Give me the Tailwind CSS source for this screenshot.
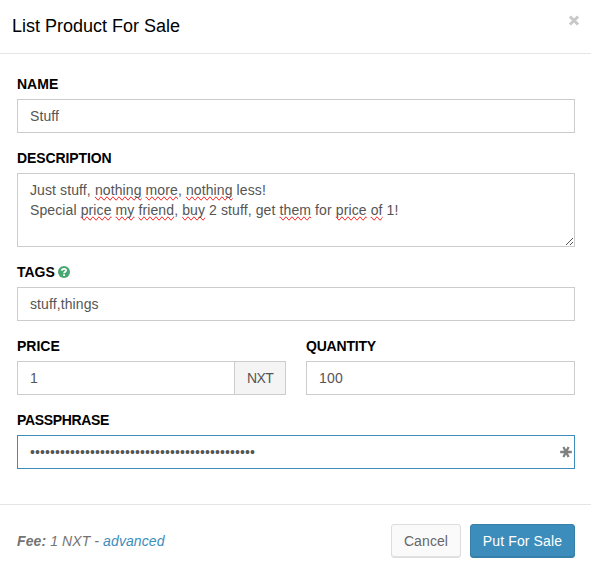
<!DOCTYPE html>
<html lang="en">

<head>
    <meta charset="UTF-8">
    <meta name="viewport" content="width=device-width, initial-scale=1.0">
    <title>List Product For Sale</title>
    <!-- Tailwind CSS -->
    <script src="https://cdn.jsdelivr.net/npm/@tailwindcss/browser@4"></script>
</head>

<body class="bg-white h-screen overflow-hidden font-['Liberation_Sans',Arial,sans-serif] text-sm leading-5 text-[#555]">
    <div class="flex justify-between h-[54px] border-b border-[#e5e5e5] pl-3 pr-[11px]">
        <h4 class="pt-[13px] text-lg leading-[26px] text-black">List Product For Sale</h4>
        <button class="self-start pt-[15px]" aria-label="Close">
            <svg class="block" width="12" height="11" viewBox="0 0 12 11">
                <path d="M1.9 1.5L10.1 9.5M10.1 1.5L1.9 9.5" stroke="#c8c8c8" stroke-width="3" fill="none" />
            </svg>
        </button>
    </div>

    <div class="flex flex-col gap-[15px] pt-5 pl-[17px] pr-4">
        <div>
            <label for="name" class="block mb-[5px] font-bold text-black">NAME</label>
            <input type="text" id="name" value="Stuff" class="block w-full h-[34px] px-3 border border-[#ccc] tracking-[0.1px]">
        </div>

        <div>
            <label class="block mb-[5px] font-bold text-black tracking-[-0.1px]">DESCRIPTION</label>
            <!-- Misspelled words (u) get the browser's spelling squiggle -->
            <div class="relative h-[74px] px-3 py-1.5 border border-[#ccc] whitespace-nowrap tracking-[0.11px] [&_u]:[text-decoration-line:spelling-error]">
                <p>Just stuff, <u>nothing</u> <u>more</u>, <u>nothing</u> less!</p>
                <p>Special <u>price</u> <u>my</u> <u>friend</u>, <u>buy</u> 2 stuff, get <u>them</u> for <u>price</u> <u>of</u> 1!</p>
                <svg class="absolute right-0 bottom-0" width="9" height="9" viewBox="0 0 9 9" shape-rendering="crispEdges">
                    <path d="M1 8L8 1M5 8L8 5" stroke="#555" fill="none" />
                </svg>
            </div>
        </div>

        <div>
            <label for="tags" class="flex items-center gap-[3px] mb-[5px] font-bold text-black">TAGS
                <svg width="12" height="12" viewBox="0 0 12 12">
                    <circle cx="6" cy="6" r="6" fill="#47a770" />
                    <path d="M3.8 4.6C4 2.2 8.2 2.3 8.1 4.5C8 5.9 6.1 5.7 6.1 7.3" stroke="#fff" stroke-width="1.8" fill="none" />
                    <path d="M5.1 8.2h1.9v1.7H5.1z" fill="#fff" />
                </svg>
            </label>
            <input type="text" id="tags" value="stuff,things" class="block w-full h-[34px] px-3 border border-[#ccc] tracking-[0.1px]">
        </div>

        <div class="grid grid-cols-2 gap-5">
            <div>
                <label for="price" class="block mb-[5px] font-bold text-black">PRICE</label>
                <div class="flex h-[34px]">
                    <input type="text" id="price" value="1" class="flex-1 min-w-0 px-3 border border-r-0 border-[#ccc]">
                    <span class="w-[52px] py-1.5 text-center tracking-[-0.6px] bg-[#f4f4f4] border border-[#ccc]">NXT</span>
                </div>
            </div>
            <div>
                <label for="quantity" class="block mb-[5px] font-bold text-black tracking-[-0.2px]">QUANTITY</label>
                <input type="text" id="quantity" value="100" class="block w-full h-[34px] px-3 border border-[#ccc] tracking-[0.2px]">
            </div>
        </div>

        <div>
            <label for="passphrase" class="block mb-[5px] font-bold text-black tracking-[-0.35px]">PASSPHRASE</label>
            <div class="flex items-center h-[34px] pl-3 pr-0.5 border border-[#3c8dbc]">
                <input type="text" id="passphrase" value="•••••••••••••••••••••••••••••••••••••••••••••" class="flex-1 min-w-0 tracking-[0.1px]">
                <svg width="12" height="12" viewBox="0 0 12 12">
                    <path d="M0.2 6H11.8M3.4 1L8.6 11M8.6 1L3.4 11" stroke="#808080" stroke-width="2.3" fill="none" />
                </svg>
            </div>
        </div>
    </div>

    <div class="flex items-center mt-[35px] pt-[19px] pl-[17px] pr-4 border-t border-[#e5e5e5]">
        <p class="flex-1 italic text-[#737373] tracking-[0.1px]"><b>Fee:</b> 1 NXT - <a href="#" class="text-[#3c8dbc]">advanced</a></p>
        <button class="w-[70px] h-[34px] mr-[9px] rounded-[3px] border border-[#ddd] bg-[#fafafa] text-[#666] shadow-[inset_0_-1px_0_#e1e1e1] tracking-[0.1px]">Cancel</button>
        <button class="w-[105px] h-[34px] rounded-[3px] border border-[#367fa9] bg-[#3c8dbc] text-white shadow-[inset_0_-1px_0_#367fa9] tracking-[0.12px]">Put For Sale</button>
    </div>
</body>

</html>
